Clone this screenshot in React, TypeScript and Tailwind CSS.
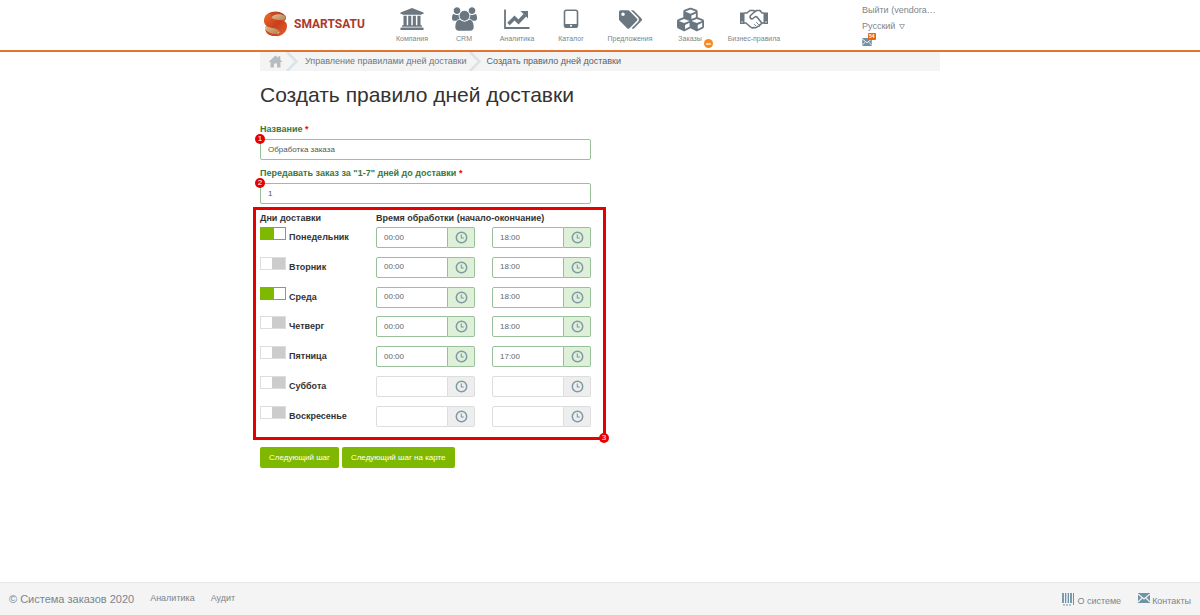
import { useState } from 'react';
import type { ReactNode } from 'react';
import { FaCubes, FaTags } from 'react-icons/fa';

interface DayRule {
  id: string;
  name: string;
  enabled: boolean;
  start: string;
  end: string;
}

const initialDays: DayRule[] = [
  { id: 'mon', name: 'Понедельник', enabled: true, start: '00:00', end: '18:00' },
  { id: 'tue', name: 'Вторник', enabled: false, start: '00:00', end: '18:00' },
  { id: 'wed', name: 'Среда', enabled: true, start: '00:00', end: '18:00' },
  { id: 'thu', name: 'Четверг', enabled: false, start: '00:00', end: '18:00' },
  { id: 'fri', name: 'Пятница', enabled: false, start: '00:00', end: '17:00' },
  { id: 'sat', name: 'Суббота', enabled: false, start: '', end: '' },
  { id: 'sun', name: 'Воскресенье', enabled: false, start: '', end: '' },
];

function Logo() {
  return (
    <a href="#home" className="flex items-center gap-[6px]">
      <svg width="25" height="27" viewBox="0 0 25 27" aria-hidden="true">
        <defs>
          <linearGradient id="logo-top" x1="0" y1="1" x2="1" y2="0">
            <stop offset="0" stopColor="#f4632a" />
            <stop offset="1" stopColor="#a93a1c" />
          </linearGradient>
          <linearGradient id="logo-band" x1="0" y1="0" x2="1" y2="1">
            <stop offset="0" stopColor="#f26a2c" />
            <stop offset=".5" stopColor="#c8401c" />
            <stop offset="1" stopColor="#e8602a" />
          </linearGradient>
          <linearGradient id="logo-sand" x1="0" y1="0" x2="1" y2="1">
            <stop offset="0" stopColor="#e3c496" />
            <stop offset="1" stopColor="#b27a4a" />
          </linearGradient>
        </defs>
        <ellipse cx="12.500" cy="8" rx="10.500" ry="6.500" fill="url(#logo-top)" />
        <path d="M8 8c2-4 9-5 14-2 1 2 0 4-3 5-4 0-10 1-11-3z" fill="url(#logo-sand)" />
        <path d="M2 17c1-3 6-3 10-2 4 1 6 4 4 7-2 3-7 3-10 1-3-2-4-4-4-6z" fill="url(#logo-sand)" />
        <path d="M3 5c-3 4-3 9 2 12 4 1 9 1 11 4 1 2-1 4-4 5 7 1 12-4 12-10 0-5-4-6-9-6-5-1-8-2-7-6-2 0-4 0-5 1z" fill="url(#logo-band)" />
        <path d="M2 19c1 5 5 7.500 11 7 2-1 3-2 3-3-4 2-10 1-14-4z" fill="#c9441f" />
      </svg>
      <span className="font-[Roboto,sans-serif] text-[12px] leading-none font-bold text-[#ab392c]">SMARTSATU</span>
    </a>
  );
}

function BankIcon() {
  return (
    <svg width="24" height="23" viewBox="0 0 24 23" fill="currentColor" aria-hidden="true">
      <path d="M12 0l11.500 4.500V6H22a.8.800 0 0 1-.8.800H2.800A.8.800 0 0 1 2 6H.5V4.500z" />
      <path d="M3.500 7.700h3.200v9.500h1.500V7.700h3.100v9.500h1.500V7.700h3.100v9.500h1.500V7.700h3.100v9.500h.7c.5 0 .8.300.8.700v.8H2v-.8c0-.4.3-.7.8-.7h.7z" />
      <path d="M1.300 19.500h21.400c.5 0 .8.300.8.800v1.700H.5v-1.700c0-.5.300-.8.800-.8z" />
    </svg>
  );
}

function UsersIcon() {
  return (
    <svg width="25" height="24" viewBox="-64 0 1920 1792" fill="currentColor" aria-hidden="true">
      <path d="M529 896q-162 5-265 128h-134q-82 0-138-40.500t-56-118.500q0-353 124-353 6 0 43.500 21t97.500 42.500 119 21.500q67 0 133-23-5 37-5 66 0 139 81 256zm1071 637q0 120-73 189.500t-194 69.500h-874q-121 0-194-69.500t-73-189.500q0-53 3.500-103.500t14-109 26.500-108.500 43-97.500 62-81 85.500-53.500 111.500-20q10 0 43 21.500t73 48 107 48 135 21.500 135-21.500 107-48 73-48 43-21.500q61 0 111.500 20t85.500 53.500 62 81 43 97.500 26.500 108.500 14 109 3.500 103.500zm-1024-1277q0 106-75 181t-181 75-181-75-75-181 75-181 181-75 181 75 75 181zm704 384q0 159-112.500 271.500t-271.500 112.500-271.500-112.500-112.500-271.500 112.500-271.500 271.500-112.500 271.500 112.500 112.500 271.500zm576 225q0 78-56 118.500t-138 40.500h-134q-103-123-265-128 81-117 81-256 0-29-5-66 66 23 133 23 59 0 119-21.500t97.500-42.500 43.500-21q124 0 124 353zm-128-609q0 106-75 181t-181 75-181-75-75-181 75-181 181-75 181 75 75 181z" />
    </svg>
  );
}

function HomeIcon() {
  return (
    <svg width="15" height="15" viewBox="0 0 15 15" fill="currentColor" aria-hidden="true">
      <path d="M7.500 1.500l2.800 2.500V2.300h2V5.800L14.500 8h-2v5.500H9V9.500H6v4H2.500V8h-2z" />
    </svg>
  );
}

function ChartIcon() {
  return (
    <svg width="26" height="22" viewBox="0 0 26 22" fill="none" stroke="currentColor" aria-hidden="true">
      <path d="M1 1.500v18.500h24.500" strokeWidth="1.800" />
      <path d="M4.500 16l6-6 4 4 6.500-7" strokeWidth="3.600" />
      <path d="M16.500 3h7.500v7.500z" fill="currentColor" stroke="none" />
    </svg>
  );
}

function TabletIcon() {
  return (
    <svg width="16" height="20" viewBox="0 0 16 20" aria-hidden="true">
      <rect x="1.500" y="1.300" width="13" height="17" rx="2" fill="none" stroke="currentColor" strokeWidth="1.600" />
      <path d="M1.500 15h13v2.500a1 1 0 0 1-1 1h-11a1 1 0 0 1-1-1z" fill="currentColor" />
      <circle cx="8" cy="16.800" r="1" fill="#fff" />
    </svg>
  );
}

function HandshakeIcon() {
  return (
    <svg width="28" height="20" viewBox="0 0 28 20" fill="none" stroke="currentColor" strokeLinejoin="round" strokeLinecap="round" aria-hidden="true">
      <path d="M0 3.500h4.500v11.500H0zM23.500 3.500H28v11.500h-4.500z" fill="currentColor" stroke="none" />
      <path d="M4.500 4h2.500l3-2.500h3.500l1.500 1 1.500-1H20L22 4h1.500" strokeWidth="1.600" />
      <path d="M4.500 14h1.500l4.500 4c1 1 2.500 1 3.500.500 2 .500 3 0 3.500-1 1.500 0 2.500-1 2.500-2 1 0 1.500-.500 1.800-1.500h1.700" strokeWidth="1.600" />
      <path d="M15 2.500l-4.500 4c-1.500 2 .5 4 2.500 3l2.500-2 1.500.500 4.800 6" strokeWidth="1.600" />
      <path d="M14.500 15.500l1.500 1.500M16.500 13.500l2 2" strokeWidth="1" />
      <circle cx="2" cy="13" r=".7" fill="#fff" stroke="none" />
      <circle cx="26" cy="13" r=".7" fill="#fff" stroke="none" />
    </svg>
  );
}

function MailIcon({ className }: { className: string }) {
  return (
    <svg className={className} viewBox="0 0 12 10" aria-hidden="true">
      <rect width="12" height="10" fill="#6d93a5" />
      <path d="M0 1l6 5 6-5M0 9l4-4M12 9l-4-4" fill="none" stroke="#f4f4f4" strokeWidth="1.200" />
    </svg>
  );
}

function BarcodeIcon() {
  return (
    <svg width="12" height="13" viewBox="0 0 12 13" stroke="#6d93a5" aria-hidden="true">
      <path d="M1 0v10M9 0v10" strokeWidth="1.800" />
      <path d="M3.500 0v10M6.500 0v10M11.500 0v12" strokeWidth="1" />
      <path d="M5 0v10" strokeWidth=".6" />
      <path d="M1 12h9" strokeWidth="1" strokeDasharray="2 1" />
    </svg>
  );
}

function ClockIcon() {
  return (
    <svg width="13" height="13" viewBox="0 0 13 13" fill="none" stroke="#7d9aa5" aria-hidden="true">
      <circle cx="6.500" cy="6.500" r="5.200" strokeWidth="1.500" />
      <path d="M6.300 3.500v3.500h2.500" strokeWidth="1.100" />
    </svg>
  );
}

function CrumbArrow() {
  return (
    <svg width="12" height="19" viewBox="0 0 12 19" fill="none" aria-hidden="true">
      <path d="M1 0l9.500 9.500-9.500 9.500" stroke="#dbe3e8" strokeWidth="2.500" />
    </svg>
  );
}

function NavItem({ label, icon, className, badge }: { label: string; icon: ReactNode; className: string; badge?: ReactNode }) {
  return (
    <a href="#nav" className={`relative flex flex-col items-center text-[#6b7780] ${className}`}>
      <span className="flex h-6 items-center">{icon}</span>
      <span className="mt-[3px] text-[7px] leading-[10px] whitespace-nowrap text-[#7b858c]">{label}</span>
      {badge}
    </a>
  );
}

function Marker({ value, className }: { value: number; className: string }) {
  return (
    <span
      className={`absolute z-10 flex size-[10px] items-center justify-center rounded-full bg-[#e60000] text-[8px] leading-none text-white ${className}`}
    >
      {value}
    </span>
  );
}

function TextField({ id, label, value, marker, onChange }: { id: string; label: string; value: string; marker: number; onChange: (value: string) => void }) {
  return (
    <div className="relative">
      <label htmlFor={id} className="block text-[9px] leading-[11px] font-bold text-[#3c763d]">
        {label} <span className="text-[#f00]">*</span>
      </label>
      <input
        id={id}
        type="text"
        value={value}
        onChange={(e) => onChange(e.target.value)}
        className="mt-1 block h-[21px] w-full rounded-[2px] border border-[#9abf9b] bg-white px-[7px] text-[8px] text-[#555] outline-none"
      />
      <Marker value={marker} className="top-[10px] -left-[5px]" />
    </div>
  );
}

function TimeField({ label, value, onChange }: { label: string; value: string; onChange: (value: string) => void }) {
  const filled = value !== '';
  return (
    <div className="flex h-[21px]">
      <input
        type="text"
        aria-label={label}
        value={value}
        onChange={(e) => onChange(e.target.value)}
        className={`min-w-0 flex-1 rounded-l-[2px] border bg-white px-[7px] text-[8px] text-[#666] outline-none ${
          filled ? 'border-[#9abf9b]' : 'border-[#ddd]'
        }`}
      />
      <button
        type="button"
        aria-label={`Выбрать: ${label}`}
        className={`flex w-[27px] items-center justify-center rounded-r-[2px] border border-l-0 ${
          filled ? 'border-[#9abf9b] bg-[#dff0d8]' : 'border-[#ddd] bg-[#eee]'
        }`}
      >
        <ClockIcon />
      </button>
    </div>
  );
}

export default function App() {
  const [title, setTitle] = useState('Обработка заказа');
  const [leadDays, setLeadDays] = useState('1');
  const [days, setDays] = useState<DayRule[]>(initialDays);

  const updateDay = (id: string, patch: Partial<DayRule>) => {
    setDays(days.map((day) => (day.id === id ? { ...day, ...patch } : day)));
  };

  return (
    <div className="flex min-h-screen flex-col bg-white font-['Liberation_Sans',Arial,sans-serif] text-[#333]">
      <header className="border-b-2 border-[#e2742f]">
        <div className="mx-auto flex h-[50px] max-w-[680px] items-start justify-between pr-1 pl-[3px]">
          <div className="flex items-start">
            <div className="mt-[10px] w-[123px]">
              <Logo />
            </div>
            <nav className="mt-[7px] flex">
              <NavItem label="Компания" icon={<BankIcon />} className="w-[52px]" />
              <NavItem label="CRM" icon={<UsersIcon />} className="w-[52px]" />
              <NavItem label="Аналитика" icon={<ChartIcon />} className="w-[54px]" />
              <NavItem label="Каталог" icon={<TabletIcon />} className="w-[54px]" />
              <NavItem label="Предложения" icon={<FaTags size={23} />} className="w-[64px]" />
              <NavItem
                label="Заказы"
                icon={<FaCubes size={27} />}
                className="w-[56px]"
                badge={
                  <span className="absolute top-8 right-[5px] flex size-[9px] items-center justify-center rounded-full bg-[#f58a1f] text-[7px] leading-none font-bold text-white">
                    ∞
                  </span>
                }
              />
              <NavItem label="Бизнес-правила" icon={<HandshakeIcon />} className="w-[72px]" />
            </nav>
          </div>
          <div className="flex w-[74px] flex-col items-start pt-1 text-[9px] leading-[13px] text-[#7b858c]">
            <a href="#logout" className="whitespace-nowrap">Выйти (vendora…</a>
            <div className="mt-[3px] flex items-center gap-[3px]">
              <select aria-label="Язык" className="appearance-none bg-transparent outline-none">
                <option>Русский</option>
              </select>
              <svg width="6" height="6" viewBox="0 0 6 6" aria-hidden="true">
                <path d="M.5 .5h5L3 5z" fill="none" stroke="#8c9aa3" strokeWidth=".8" />
              </svg>
            </div>
            <a href="#messages" aria-label="Сообщения" className="relative mt-[5px] block">
              <MailIcon className="h-2 w-[10px]" />
              <span className="absolute -top-[5px] left-[6px] rounded-[1px] bg-[#ec6608] px-[1px] text-[5px] leading-[7px] font-bold text-white">54</span>
            </a>
          </div>
        </div>
      </header>

      <main className="mx-auto w-full max-w-[680px] flex-1">
        <nav aria-label="Навигация" className="flex h-[19px] items-center bg-[#f4f4f4] text-[9px] text-[#6b7780]">
          <a href="#home" aria-label="Главная" className="mr-[3px] ml-2 text-[#b7bcc0]">
            <HomeIcon />
          </a>
          <CrumbArrow />
          <a href="#rules" className="mr-[3px] ml-[7px]">Управление правилами дней доставки</a>
          <CrumbArrow />
          <span className="ml-[5px] text-[#56616a]">Создать правило дней доставки</span>
        </nav>

        <h1 className="mt-[11px] text-[21px] leading-[26px]">Создать правило дней доставки</h1>

        <form className="mt-4 w-[331px] max-w-full" onSubmit={(e) => e.preventDefault()}>
          <div className="space-y-2">
            <TextField id="rule-title" label="Название" value={title} marker={1} onChange={setTitle} />
            <TextField id="lead-days" label={'Передавать заказ за "1-7" дней до доставки'} value={leadDays} marker={2} onChange={setLeadDays} />
          </div>

          <section className="relative mt-[3px] -mr-[15px] -ml-[7px] border-[3px] border-[#e60000] pt-[2px] pr-3 pb-[10px] pl-1">
            <div className="grid grid-cols-[116px_1fr] text-[9px] leading-[12px] font-bold">
              <span>Дни доставки</span>
              <span>Время обработки (начало-окончание)</span>
            </div>
            <div className="mt-[3px] flex h-[200px] flex-col justify-between">
              {days.map((day) => (
                <div key={day.id} className="grid grid-cols-[99px_99px_99px] gap-[17px]">
                  <div className="flex items-start gap-[3px]">
                    <input
                      id={day.id}
                      type="checkbox"
                      checked={day.enabled}
                      onChange={(e) => updateDay(day.id, { enabled: e.target.checked })}
                      className={`h-[13px] w-[26px] shrink-0 appearance-none border bg-white before:block before:h-full before:w-[13px] ${
                        day.enabled ? 'border-[#7fb800] before:bg-[#7fb800]' : 'border-[#ddd] before:ml-auto before:bg-[#ccc]'
                      }`}
                    />
                    <label htmlFor={day.id} className="text-[9px] leading-[21px] font-bold">{day.name}</label>
                  </div>
                  <TimeField label={`${day.name}, начало`} value={day.start} onChange={(start) => updateDay(day.id, { start })} />
                  <TimeField label={`${day.name}, окончание`} value={day.end} onChange={(end) => updateDay(day.id, { end })} />
                </div>
              ))}
            </div>
            <Marker value={3} className="-right-[6px] -bottom-[6px]" />
          </section>

          <div className="mt-[7px] flex gap-[3px] text-[8px] leading-[21px] text-white">
            <button type="submit" className="rounded-[2px] bg-[#7fb800] px-[9px]">Следующий шаг</button>
            <button type="button" className="rounded-[2px] bg-[#7fb800] px-[9px]">Следующий шаг на карте</button>
          </div>
        </form>
      </main>

      <footer className="flex h-[33px] items-center justify-between border-t border-[#e7e7e7] bg-[#f4f4f4] px-[9px] text-[9px] text-[#7b858c]">
        <div className="flex items-center gap-4">
          <span className="text-[11px]">© Система заказов 2020</span>
          <a href="#analytics">Аналитика</a>
          <a href="#audit">Аудит</a>
        </div>
        <div className="flex items-center gap-[17px]">
          <a href="#about" className="flex items-end gap-[3px]">
            <BarcodeIcon />
            <span className="leading-[9px]">О системе</span>
          </a>
          <a href="#contacts" className="flex items-end gap-[2px]">
            <MailIcon className="mb-[3px] h-[10px] w-3" />
            <span className="leading-[9px]">Контакты</span>
          </a>
        </div>
      </footer>
    </div>
  );
}
